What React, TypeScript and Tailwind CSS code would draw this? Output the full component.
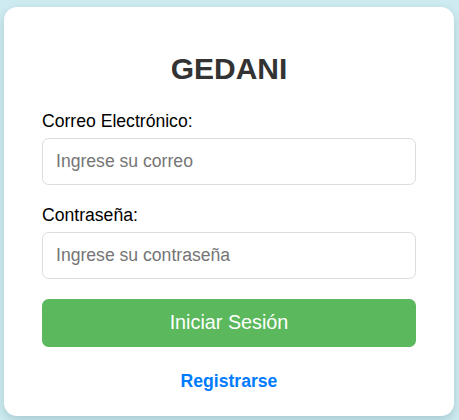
import { useState } from "react";

export default function App() {
  const [email, setEmail] = useState("");
  const [password, setPassword] = useState("");

  return (
    <div
      className="min-h-screen bg-[#cdebf0] pt-[7px]"
      style={{ fontFamily: '"Liberation Sans", Arial, sans-serif' }}
    >
      <div className="ml-[4px] h-[409px] w-[450px] rounded-[13px] bg-white px-[38px] pt-[45px] shadow-[0_4px_10px_rgba(0,60,80,0.18)]">
        <h2 className="text-center text-[30px] font-bold leading-[34px] text-[#333]">GEDANI</h2>

        <form className="mt-[25px]" onSubmit={(e) => e.preventDefault()}>
          <label className="mb-[7px] block text-[17.6px] leading-[20px] text-black">
            Correo Electrónico:
          </label>
          <input
            type="email"
            placeholder="Ingrese su correo"
            value={email}
            onChange={(e) => setEmail(e.target.value)}
            className="block h-[47px] w-full rounded-[6.6px] border border-[#dcdcdc] px-[13px] text-[17.6px] text-black placeholder-[#757575] outline-none"
          />

          <label className="mb-[7px] mt-[20px] block text-[17.6px] leading-[20px] text-black">
            Contraseña:
          </label>
          <input
            type="password"
            placeholder="Ingrese su contraseña"
            value={password}
            onChange={(e) => setPassword(e.target.value)}
            className="block h-[47px] w-full rounded-[6.6px] border border-[#dcdcdc] px-[13px] text-[17.6px] text-black placeholder-[#757575] outline-none"
          />

          <button
            type="submit"
            className="mt-[20px] block h-[48px] w-full rounded-[6.6px] bg-[#5cb85c] text-[19.8px] text-white"
          >
            Iniciar Sesión
          </button>
        </form>

        <div className="mt-[23px] text-center">
          <a href="#" className="text-[17.6px] font-bold leading-[20px] text-[#007bff]">
            Registrarse
          </a>
        </div>
      </div>
    </div>
  );
}
